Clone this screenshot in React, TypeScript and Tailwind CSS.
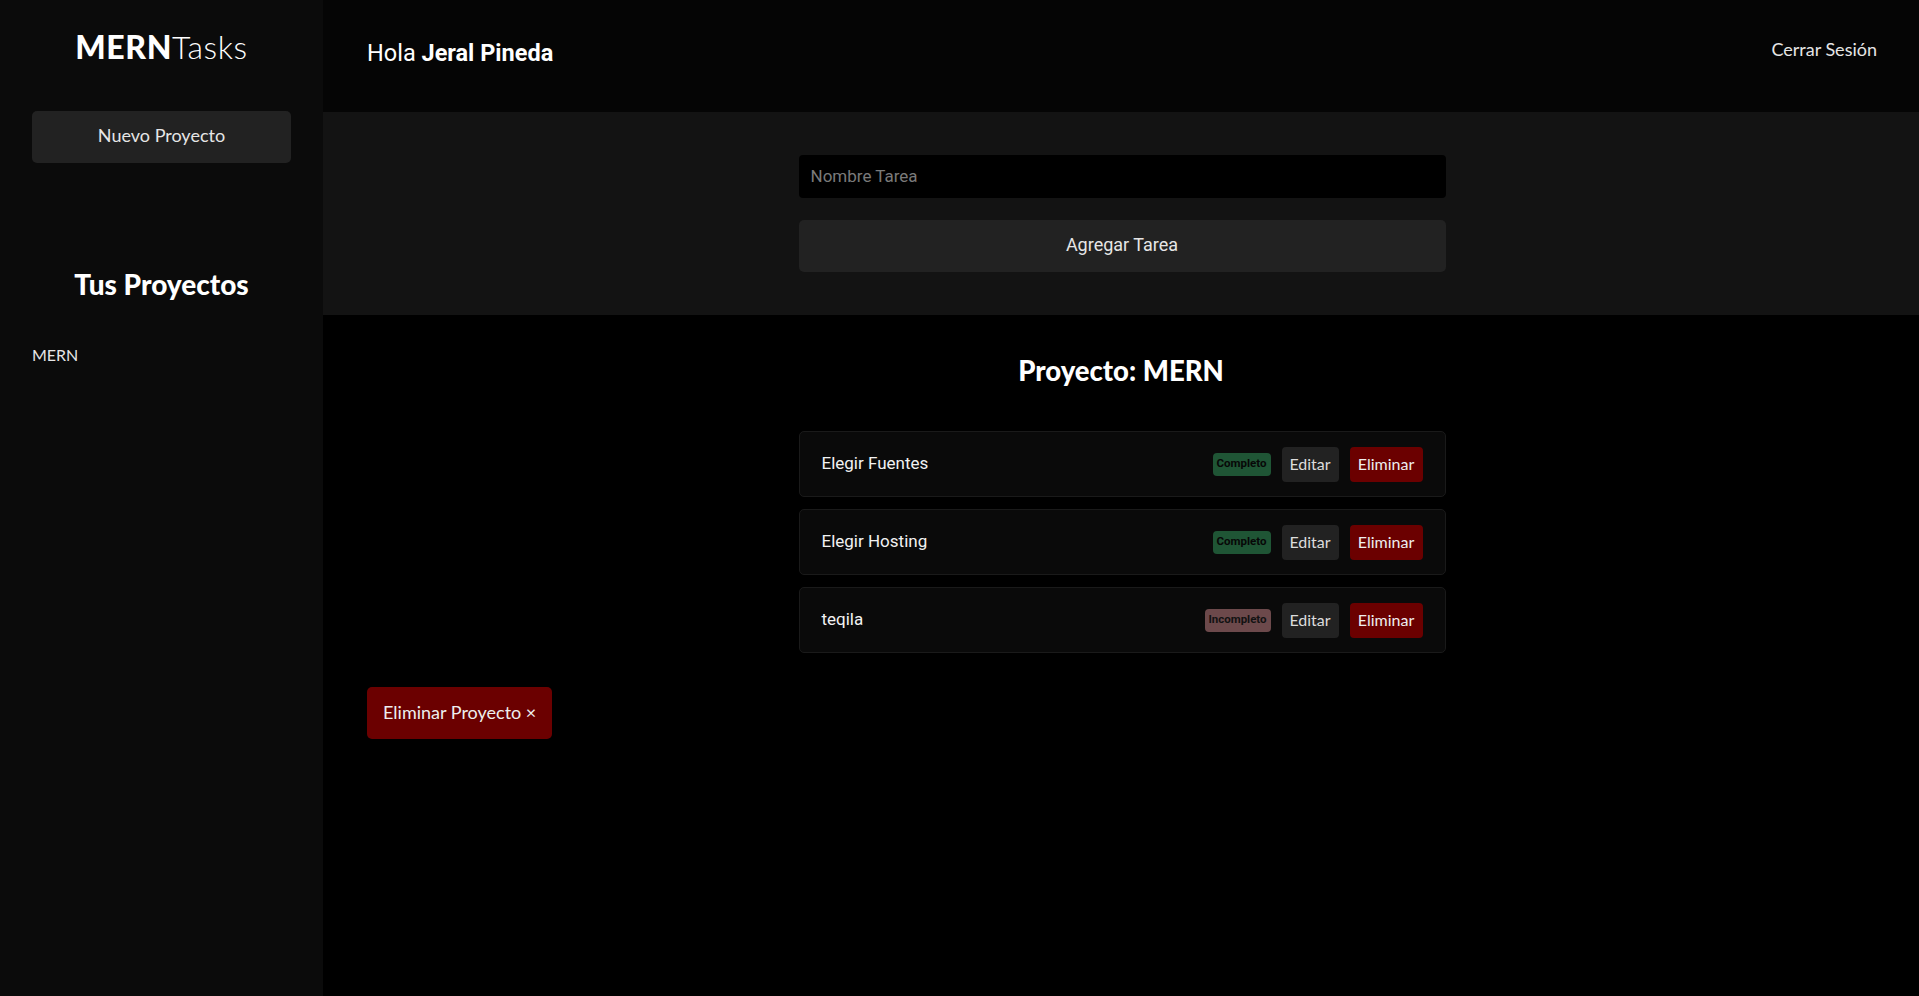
const tareas = [
  { nombre: "Elegir Fuentes", estado: true },
  { nombre: "Elegir Hosting", estado: true },
  { nombre: "teqila", estado: false },
];

const raleway = "font-['Lato','Open_Sans',sans-serif]";
const roboto = "font-['Roboto','Liberation_Sans',sans-serif]";

function Sidebar() {
  return (
    <aside className="flex w-[323px] shrink-0 flex-col bg-[#0b0b0b] px-[32px] pt-[27px]">
      <h1 className={`${raleway} text-center text-[32px] leading-[40px] tracking-[0.6px] text-white`}>
        <span className="font-black">MERN</span>
        <span className="font-light">Tasks</span>
      </h1>
      <button className={`${raleway} mt-[44px] h-[52px] w-[259px] rounded-[5px] bg-[#222222] pb-[4px] text-[18px] text-[#e6e6e6]`}>
        Nuevo Proyecto
      </button>
      <h2 className={`${raleway} mt-[103px] text-center text-[28px] leading-[36px] font-black text-white`}>
        Tus Proyectos
      </h2>
      <ul className="mt-[41px]">
        <li className={`${raleway} text-[16px] leading-[24px] text-[#e6e6e6]`}>MERN</li>
      </ul>
    </aside>
  );
}

function Tarea({ nombre, estado }: { nombre: string; estado: boolean }) {
  return (
    <li className="flex h-[66px] items-center justify-between rounded-[5px] border border-[#1a1a1a] bg-[#0a0a0a] px-[22px]">
      <p className={`${roboto} text-[17px] text-[#f2f2f2]`}>{nombre}</p>
      <div className="flex items-center gap-[11px]">
        {estado ? (
          <span className={`${roboto} flex h-[23px] w-[58px] items-center justify-center rounded-[4px] bg-[#1f5535] text-[11.5px] font-bold text-[#070707]`}>
            Completo
          </span>
        ) : (
          <span className={`${roboto} flex h-[23px] w-[66px] items-center justify-center rounded-[4px] bg-[#6c494b] text-[11.5px] font-bold text-[#121212]`}>
            Incompleto
          </span>
        )}
        <button className={`${raleway} h-[35px] w-[57px] rounded-[4px] bg-[#222222] text-[16px] text-[#dcdcdc]`}>
          Editar
        </button>
        <button className={`${raleway} h-[35px] w-[73px] rounded-[4px] bg-[#6b0000] text-[16px] text-[#eeeeee]`}>
          Eliminar
        </button>
      </div>
    </li>
  );
}

export default function App() {
  return (
    <div className="flex h-[996px] w-full overflow-hidden bg-black">
      <Sidebar />
      <div className="flex flex-1 flex-col">
        <header className="flex h-[112px] items-center justify-between bg-[#050505] pr-[42px] pl-[44px]">
          <p className={`${roboto} -mt-[4px] text-[23.5px] text-white`}>
            Hola <span className="font-bold">Jeral Pineda</span>
          </p>
          <button className={`${raleway} -mt-[14px] text-[18px] text-[#e6e6e6]`}>Cerrar Sesión</button>
        </header>

        <div className="bg-[#131313] py-[43px]">
          <form className="relative left-[1px] mx-auto flex w-[647px] flex-col gap-[22px]">
            <input
              type="text"
              placeholder="Nombre Tarea"
              className={`${roboto} h-[43px] rounded-[4px] bg-black px-[12px] pb-[2px] text-[17px] text-white outline-none placeholder:text-[#7a7a7a]`}
            />
            <button type="button" className={`${roboto} h-[52px] rounded-[5px] bg-[#222222] pb-[3px] text-[18px] text-[#e6e6e6]`}>
              Agregar Tarea
            </button>
          </form>
        </div>

        <main className="flex-1 bg-black px-[44px] pt-[38px]">
          <h2 className={`${raleway} text-center text-[27.5px] leading-[36px] font-black text-white`}>
            Proyecto: MERN
          </h2>
          <ul className="relative left-[1px] mx-auto mt-[42px] flex w-[647px] flex-col gap-[12px]">
            {tareas.map((t) => (
              <Tarea key={t.nombre} nombre={t.nombre} estado={t.estado} />
            ))}
          </ul>
          <button className={`${raleway} mt-[34px] h-[52px] rounded-[5px] bg-[#6b0000] px-[16px] pb-[2px] text-[18px] text-[#eeeeee]`}>
            Eliminar Proyecto &times;
          </button>
        </main>
      </div>
    </div>
  );
}
